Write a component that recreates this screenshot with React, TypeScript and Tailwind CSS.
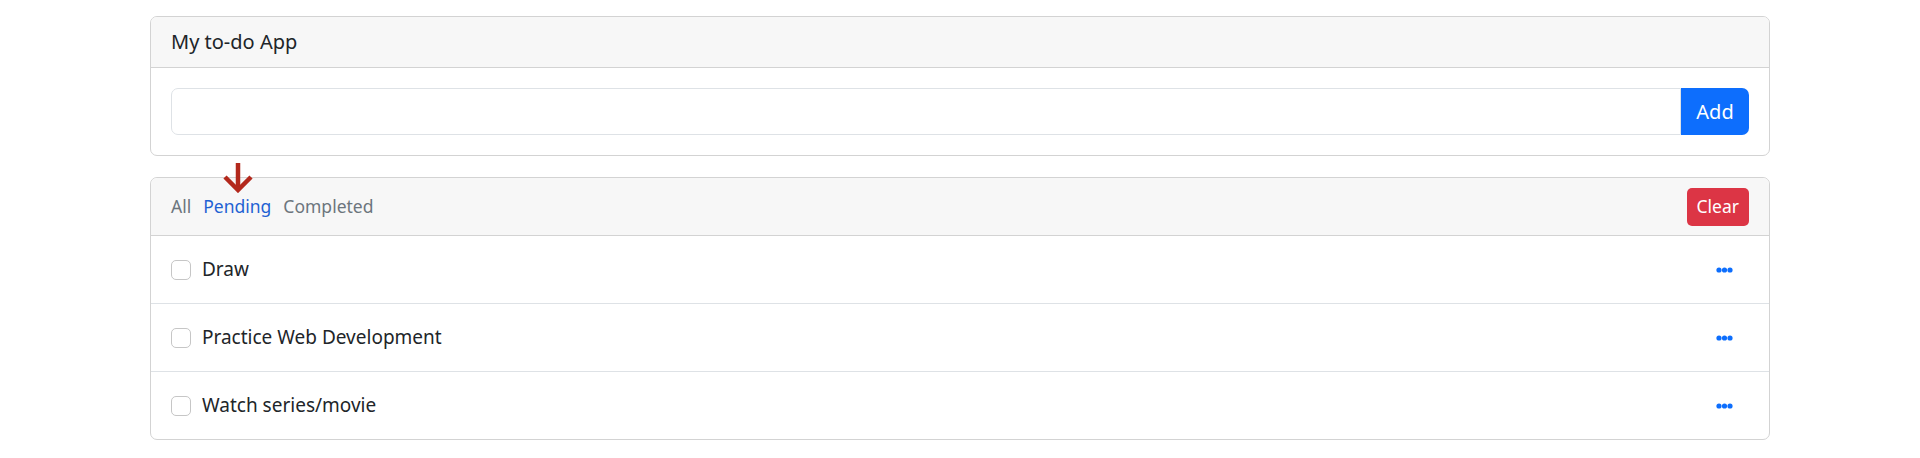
import { useState } from 'react';

const todos = ['Draw', 'Practice Web Development', 'Watch series/movie'];

const Dots = () => (
  <svg width="17" height="6" viewBox="0 0 17 6" fill="#0d6efd">
    <circle cx="3" cy="3" r="2.6" />
    <circle cx="8.5" cy="3" r="2.6" />
    <circle cx="14" cy="3" r="2.6" />
  </svg>
);

const App = () => {
  const [text, setText] = useState('');

  return (
    <div className="bg-white min-h-[458px] pt-4 font-['Noto_Sans',sans-serif] text-[#212529]">
      <div className="mx-auto w-[1620px]">
        <div className="border border-[#d3d3d3] rounded-[7px] overflow-hidden">
          <div className="bg-[#f7f7f7] border-b border-[#d3d3d3] px-5 h-[51px] flex items-center text-[20px]">
            My to-do App
          </div>
          <div className="p-5 flex">
            <input
              value={text}
              onChange={(e) => setText(e.target.value)}
              className="flex-1 h-[47px] border border-[#dee2e6] rounded-l-[7px] px-3 outline-none"
            />
            <button className="w-[68px] h-[47px] bg-[#0d6efd] text-white text-[20px] rounded-r-[7px]">
              Add
            </button>
          </div>
        </div>

        <div className="relative mt-[21px] border border-[#d3d3d3] rounded-[7px]">
          <svg
            className="absolute left-[71px] -top-[16px]"
            width="32"
            height="31"
            viewBox="0 0 32 31"
            fill="none"
            stroke="#b3281c"
            strokeWidth="4.5"
          >
            <path d="M16 1 V28" />
            <path d="M3 15 L16 28 L29 15" />
          </svg>
          <div className="bg-[#f7f7f7] border-b border-[#d3d3d3] rounded-t-[7px] px-5 h-[58px] flex items-center justify-between">
            <div className="flex items-center gap-[12px] text-[17.5px]">
              <span className="text-[#6c757d]">All</span>
              <span className="text-[#1f62d3]">Pending</span>
              <span className="text-[#6c757d]">Completed</span>
            </div>
            <button className="h-[38px] px-[10px] bg-[#dc3545] text-white text-[17.5px] rounded-[5px]">
              Clear
            </button>
          </div>
          {todos.map((t, i) => (
            <div
              key={t}
              className={`h-[67px] px-5 flex items-center justify-between ${i < todos.length - 1 ? 'border-b border-[#dee2e6] box-content' : ''}`}
            >
              <label className="flex items-center gap-[11px] text-[19px]">
                <span className="w-5 h-5 border border-[#c6c6c6] rounded-[5px] bg-white" />
                {t}
              </label>
              <div className="pr-[16px]">
                <Dots />
              </div>
            </div>
          ))}
        </div>
      </div>
    </div>
  );
};

export default App;
